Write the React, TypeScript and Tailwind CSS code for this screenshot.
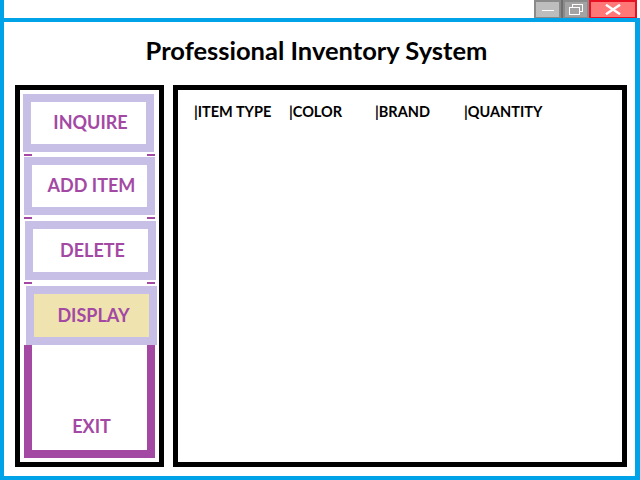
import React from 'react';

const FONT = { fontFamily: 'Lato, "Open Sans", sans-serif' };

function Gap({ h }: { h: string }) {
  return (
    <div className={`${h} flex items-center justify-between pl-[4px] pr-[4px]`}>
      <span className="w-[8px] h-[2px] bg-[#a349a4]" />
      <span className="w-[8px] h-[2px] bg-[#a349a4]" />
    </div>
  );
}

function MenuButton({ label, className, inner }: { label: string; className: string; inner: string }) {
  return (
    <div className={`border-[8px] border-[#c8bfe7] ${className}`}>
      <div className={`h-full flex items-center justify-center pl-[4px] pb-[1px] ${inner}`}>
        <span className="text-[18px] font-bold text-[#a349a4]">{label}</span>
      </div>
    </div>
  );
}

export default function App() {
  const headers = [
    { label: '|ITEM TYPE', w: 'w-[95px]' },
    { label: '|COLOR', w: 'w-[86px]' },
    { label: '|BRAND', w: 'w-[89px]' },
    { label: '|QUANTITY', w: 'w-[100px]' },
  ];

  return (
    <div className="w-[640px] h-[480px] bg-white flex flex-col border-l-4 border-[#00a2e8]" style={FONT}>
      {/* title bar */}
      <div className="h-[18px] flex justify-end items-start pr-[3px]">
        <div className="w-[27px] h-[19px] bg-[#bdbdbd] border-2 border-[#8a8a8a] flex items-center justify-center">
          <span className="w-[12px] h-[1px] bg-white mt-[2px]" />
        </div>
        <div className="w-[2px] h-[19px] bg-[#6e6e6e]" />
        <div className="w-[26px] h-[19px] bg-[#a3a3a3] border-2 border-[#8a8a8a] flex items-center justify-center">
          <svg width="16" height="12" viewBox="0 0 16 12" fill="none" stroke="white" strokeWidth="1">
            <rect x="4.5" y="0.5" width="10" height="7" />
            <rect x="1.5" y="3.5" width="10" height="7" fill="#a3a3a3" />
          </svg>
        </div>
        <div className="w-[48px] h-[19px] bg-[#ff7777] border-2 border-[#e81123] flex items-center justify-center">
          <svg width="16" height="11" viewBox="0 0 16 11" stroke="white" strokeWidth="2.5" strokeLinecap="square">
            <path d="M2 1.5 L14 9.5 M14 1.5 L2 9.5" />
          </svg>
        </div>
      </div>

      {/* window body */}
      <div className="flex-1 flex flex-col border-t-4 border-r-[5px] border-b-4 border-[#00a2e8]">
        <div className="h-[63px] flex items-center justify-center pb-[6px] pr-[6px]">
          <h1 className="text-[25.5px] font-bold text-black">Professional Inventory System</h1>
        </div>

        <div className="flex-1 flex pl-[11px] pr-[8px] pb-[9px] gap-[9px]">
          {/* menu */}
          <div className="w-[149px] border-[5px] border-black pt-[4px] flex flex-col">
            <MenuButton label="INQUIRE" className="ml-[3px] w-[131px] h-[58px]" inner="bg-white" />
            <Gap h="h-[5px]" />
            <MenuButton label="ADD ITEM" className="ml-[4px] w-[131px] h-[58px]" inner="bg-white" />
            <Gap h="h-[6px]" />
            <MenuButton label="DELETE" className="ml-[5px] w-[131px] h-[59px]" inner="bg-white" />
            <Gap h="h-[6px]" />
            <MenuButton label="DISPLAY" className="ml-[6px] w-[131px] h-[59px]" inner="bg-[#efe4b0]" />
            <div className="ml-[4px] w-[131px] h-[113px] border-x-[8px] border-b-[8px] border-[#a349a4] flex items-end justify-center pb-[10px] pl-[4px]">
              <span className="text-[18px] font-bold text-[#a349a4]">EXIT</span>
            </div>
          </div>

          {/* table */}
          <div className="flex-1 border-[5px] border-black pl-[16px] pt-[11px]">
            <div className="flex">
              {headers.map((h) => (
                <span key={h.label} className={`${h.w} text-[14.5px] font-bold text-black`}>
                  {h.label}
                </span>
              ))}
            </div>
          </div>
        </div>
      </div>
    </div>
  );
}
